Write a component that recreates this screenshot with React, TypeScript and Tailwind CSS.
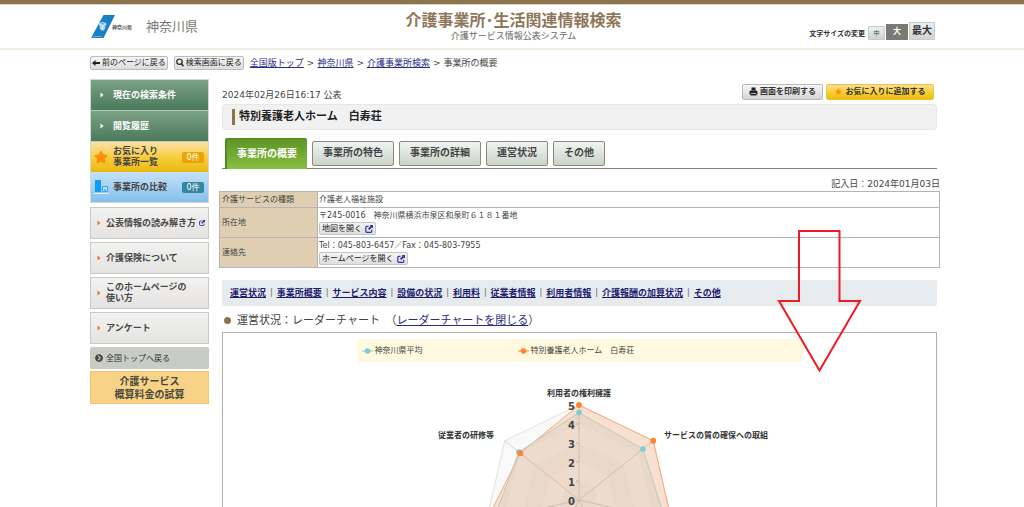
import { ReactNode } from "react";
import { FaChevronCircleRight, FaStar } from "react-icons/fa";

const AXES = 7;
const CX = 150;
const CY = 112;
const STEP = 19;

function point(axis: number, level: number): [number, number] {
  const angle = (axis * 2 * Math.PI) / AXES;
  return [CX + Math.sin(angle) * STEP * level, CY - Math.cos(angle) * STEP * level];
}

function polygon(levels: number[]): string {
  return levels.map((level, i) => point(i, level).map((n) => n.toFixed(2)).join(",")).join(" ");
}

const AVERAGE = [4.6, 4.3, 4.65, 4.2, 4.2, 4.6, 4.05];
const FACILITY = [5, 5, 5, 5, 5, 5, 3.95];
const RINGS = [5, 4, 3, 2, 1];

function RadarChart() {
  return (
    <svg
      viewBox="-79 0 460 230"
      width="460"
      height="230"
      className="block"
      role="img"
      aria-label="レーダーチャート"
      fontFamily="'DejaVu Sans','Noto Sans CJK JP',sans-serif"
    >
      {RINGS.map((level, i) => (
        <polygon key={level} points={polygon(Array(AXES).fill(level))} fill={i % 2 ? "#ffffff" : "#f9f9f9"} />
      ))}
      <polygon points={polygon(Array(AXES).fill(5))} fill="none" stroke="#e0e0e0" />
      {FACILITY.map((_, i) => {
        const [x, y] = point(i, 5);
        return <line key={i} x1={CX} y1={CY} x2={x} y2={y} stroke="#d2d2d2" />;
      })}
      {[1, 2, 3, 4].map((n) => (
        <line key={n} x1={CX - 3} x2={CX} y1={CY - n * STEP} y2={CY - n * STEP} stroke="#bbbbbb" />
      ))}
      <polygon points={polygon(FACILITY)} fill="#f58a45" fillOpacity="0.23" stroke="#f7ab7c" />
      <polygon points={polygon(AVERAGE)} fill="#a8b8b8" fillOpacity="0.18" stroke="#bccbc0" />
      {[0, 1, 2, 3, 4, 5].map((n) => (
        <text key={n} x={CX - 4} y={CY + 5 - n * STEP} fontSize="10" fontWeight="700" fill="#444444" textAnchor="end">
          {n}
        </text>
      ))}
      {AVERAGE.map((level, i) => {
        const [x, y] = point(i, level);
        return <circle key={i} cx={x} cy={y} r="2.8" fill="#80cbd3" />;
      })}
      {FACILITY.map((level, i) => {
        const [x, y] = point(i, level);
        return <circle key={i} cx={x} cy={y} r="2.9" fill="#ff8430" />;
      })}
      <g fontSize="8" fontWeight="700" fill="#333333">
        <text x={CX} y="8" textAnchor="middle">利用者の権利擁護</text>
        <text x="235" y="50">サービスの質の確保への取組</text>
        <text x="65" y="50" textAnchor="end">従業者の研修等</text>
      </g>
    </svg>
  );
}

function PrefectureLogo() {
  return (
    <svg width="24" height="24" viewBox="0 0 24 24" aria-hidden="true">
      <path d="M12.500 0H24L12.500 23H0z" fill="#1b7fc4" />
      <circle cx="11.500" cy="9.800" r="2.400" fill="none" stroke="#cfe7f5" strokeWidth="1" />
      <path d="M7.300 9c.2-1.600 1.800-2 2.900-1l1.300 1 1.300-1c1.200-1 2.700-.5 2.900 1l-1.500 2.800c.3 1.500-.3 2.700-1.400 3.600H10c-1-.9-1.500-2.100-1.200-3.600z" fill="#9fd0ed" />
      <path d="M9 9.300l2.500 2.200L14 9.300M11.500 11v4.200M9.800 13.200h3.400" stroke="#f0f8fd" strokeWidth=".8" fill="none" />
      <path d="M2 21.500h8.500" stroke="#8fc3e6" strokeWidth=".7" />
    </svg>
  );
}

function BackArrowIcon() {
  return (
    <svg width="8" height="8" viewBox="0 0 8 8" aria-hidden="true">
      <path d="M3.500 1L0 4l3.500 3V5H8V3H3.500z" fill="#222222" />
    </svg>
  );
}

function SearchIcon() {
  return (
    <svg width="8" height="9" viewBox="0 0 8 9" aria-hidden="true">
      <circle cx="3.500" cy="3.700" r="2.700" fill="none" stroke="#222222" strokeWidth="1.200" />
      <path d="M5.500 5.800L7.500 8.200" stroke="#222222" strokeWidth="1.500" />
    </svg>
  );
}

function PrinterIcon() {
  return (
    <svg width="9" height="9" viewBox="0 0 9 9" aria-hidden="true">
      <path d="M2.500 .5h4v2.700h-4zM.5 4.500L1.500 3.500h6l1 1v3H7V6H2v1.500H.5z" fill="#222222" />
      <path d="M2 6.700h5l.6 1.800H1.400z" fill="#222222" />
    </svg>
  );
}

function ExternalIcon({ size }: { size: number }) {
  return (
    <svg width={size} height={size} viewBox="0 0 8 8" aria-hidden="true">
      <path d="M3.500 1.300H1.800a1 1 0 0 0-1 1v4a1 1 0 0 0 1 1h4a1 1 0 0 0 1-1V4.800" fill="none" stroke="#2f33a4" strokeWidth="1.200" />
      <path d="M4.500 0H8v3.500L6.900 2.400 4.200 5.100 2.900 3.800 5.600 1.100z" fill="#2f33a4" />
    </svg>
  );
}

function ToolButton({ children }: { children: ReactNode }) {
  return (
    <button
      type="button"
      className="flex h-[14px] items-center gap-[2px] rounded-xs border border-[#bcbcbc] bg-linear-to-b from-[#f6f6f6] to-[#dcdcdc] px-px text-[8px] leading-none whitespace-nowrap text-[#222]"
    >
      {children}
    </button>
  );
}

function GreyLink({ children, external }: { children: ReactNode; external?: boolean }) {
  return (
    <a
      href="#"
      className="flex h-8 items-center gap-[5px] border border-[#c9c9c9] bg-linear-to-b from-[#f2f2f1] to-[#e4e3e2] pl-[6px] font-bold whitespace-nowrap text-[#484848]"
    >
      <svg width="4" height="6" viewBox="0 0 4 6" aria-hidden="true">
        <path d="M0.500 0.500L3.500 3L0.500 5.500z" fill="#f26b3a" />
      </svg>
      <span className="flex items-center gap-[3px]">
        <span>{children}</span>
        {external && <ExternalIcon size={6} />}
      </span>
    </a>
  );
}

function GreenLink({ children }: { children: ReactNode }) {
  return (
    <a
      href="#"
      className="flex h-[31px] items-center gap-[9px] border-b border-[#b9c9bd] bg-linear-to-b from-[#7ba184] to-[#4b7a5b] pl-[9px] font-bold text-white"
    >
      <svg width="4" height="6" viewBox="0 0 4 6" aria-hidden="true">
        <path d="M0.500 0.500L3.500 3L0.500 5.500z" fill="#ffffff" />
      </svg>
      {children}
    </a>
  );
}

function Sidebar() {
  return (
    <nav className="w-[119px] shrink-0 text-[9px] leading-[11px]" aria-label="メニュー">
      <div className="border border-[#d5d9d6]">
        <GreenLink>現在の検索条件</GreenLink>
        <GreenLink>閲覧履歴</GreenLink>
        <a
          href="#"
          className="flex h-[30px] items-center bg-linear-to-b from-[#fde1a4] via-[#f7cd3b] to-[#ecb90a] pr-1 pl-[3px] font-bold text-[#444]"
        >
          <FaStar size={14} color="#ff8c0a" />
          <span className="ml-[5px] flex-1">
            お気に入り
            <br />
            事業所一覧
          </span>
          <span className="w-[22px] rounded-xs bg-[#eaa500] text-center text-[8px] font-normal text-white">0件</span>
        </a>
        <a
          href="#"
          className="flex h-[30px] items-center bg-linear-to-b from-[#c4e2f6] to-[#84bfed] pr-1 pl-[3px] font-bold text-[#444]"
        >
          <svg width="15" height="14" viewBox="0 0 15 14" aria-hidden="true">
            <path d="M1 0h6v12H1z" fill="#0c9bf5" />
            <path d="M8.500 6.500h5v5h-5z" fill="#b9e0fb" stroke="#2ba5f2" />
            <path d="M10 9h2v2h-2z" fill="#5cb8f4" />
            <path d="M0 13.500h15" stroke="#e4f3fd" />
          </svg>
          <span className="ml-1 flex-1">事業所の比較</span>
          <span className="w-[22px] rounded-xs bg-[#34859f] text-center text-[8px] font-normal text-white">0件</span>
        </a>
      </div>
      <div className="mt-1 flex flex-col gap-[3px]">
        <GreyLink external>公表情報の読み解き方</GreyLink>
        <GreyLink>介護保険について</GreyLink>
        <GreyLink>
          このホームページの
          <br />
          使い方
        </GreyLink>
        <GreyLink>アンケート</GreyLink>
        <a
          href="#"
          className="flex h-[22px] items-center gap-[3px] rounded-xs bg-[#c8ccc4] pl-[5px] text-[8px] text-[#333]"
        >
          <FaChevronCircleRight size={8} color="#444" />
          全国トップへ戻る
        </a>
      </div>
      <a
        href="#"
        className="mt-[2px] flex h-[33px] items-center justify-center border border-[#f3c56e] bg-[#f8d287] text-center text-[10px] leading-[13px] font-bold text-[#4a4a3c]"
      >
        介護サービス
        <br />
        概算料金の試算
      </a>
    </nav>
  );
}

const TABS = ["事業所の特色", "事業所の詳細", "運営状況", "その他"];
const SECTIONS = [
  "運営状況",
  "事業所概要",
  "サービス内容",
  "設備の状況",
  "利用料",
  "従業者情報",
  "利用者情報",
  "介護報酬の加算状況",
  "その他",
];

function OpenButton({ children }: { children: ReactNode }) {
  return (
    <button
      type="button"
      className="flex h-[13px] items-center gap-[3px] rounded-xs border border-[#c4c4c4] bg-linear-to-b from-[#f5f5f5] to-[#dedede] px-[2px] leading-none text-[#222]"
    >
      {children}
      <ExternalIcon size={8} />
    </button>
  );
}

function DetailTable() {
  const head = "w-[98px] border border-[#b4b4b4] bg-[#dfceb1] px-[2px] text-left font-normal";
  const cell = "border border-[#b4b4b4] px-px";
  return (
    <table className="w-full border-collapse text-[8px] leading-[12px] text-[#444]">
      <tbody>
        <tr className="h-4">
          <th scope="row" className={head}>介護サービスの種類</th>
          <td className={cell}>介護老人福祉施設</td>
        </tr>
        <tr className="h-[30px]">
          <th scope="row" className={head}>所在地</th>
          <td className={cell}>
            〒245-0016　神奈川県横浜市泉区和泉町６１８１番地
            <OpenButton>地図を開く</OpenButton>
          </td>
        </tr>
        <tr className="h-[30px]">
          <th scope="row" className={head}>連絡先</th>
          <td className={cell}>
            Tel：045-803-6457／Fax：045-803-7955
            <OpenButton>ホームページを開く</OpenButton>
          </td>
        </tr>
      </tbody>
    </table>
  );
}

function LegendItem({ color, children }: { color: string; children: ReactNode }) {
  return (
    <span className="flex items-center gap-[2px]">
      <svg width="11" height="6" viewBox="0 0 11 6" aria-hidden="true">
        <path d="M0 3h11" stroke={color} />
        <circle cx="5.500" cy="3" r="2.800" fill={color} />
      </svg>
      {children}
    </span>
  );
}

export default function App() {
  return (
    <div
      lang="ja"
      className="relative min-h-screen overflow-x-hidden bg-white font-['DejaVu_Sans','Noto_Sans_CJK_JP',sans-serif] text-[9px] leading-[12px] text-[#444]"
    >
      <header className="border-t-4 border-b-2 border-t-[#8e744b] border-b-[#eef0e3]">
        <div className="border-t border-[#ddd5c8]">
          <div className="mx-auto grid h-[43px] max-w-[856px] grid-cols-3 pr-1 pl-[7px]">
            <div className="flex items-center">
              <PrefectureLogo />
              <span className="-ml-[3px] text-[5px] font-bold text-[#555]">神奈川県</span>
              <span className="ml-[14px] text-[13px] text-[#777]">神奈川県</span>
            </div>
            <div className="flex flex-col items-center pt-[6px] whitespace-nowrap">
              <h1 className="text-[16px] leading-[19px] font-bold text-[#8e7759]">介護事業所･生活関連情報検索</h1>
              <p className="text-[9px] leading-[12px] text-[#666]">介護サービス情報公表システム</p>
            </div>
            <div className="flex items-end justify-end gap-px pr-px pb-2">
              <span className="mr-[2px] text-[7px] font-bold text-[#333]">文字サイズの変更</span>
              <button type="button" className="h-[14px] w-[17px] border border-[#c8cccc] bg-linear-to-b from-[#e9f0f1] to-[#d2d2d2] text-[6px] leading-none">
                中
              </button>
              <button type="button" className="h-4 w-[22px] bg-[#797a74] text-[8px] leading-none font-bold text-white">
                大
              </button>
              <button type="button" className="h-[18px] w-[26px] border border-[#c8cccc] bg-linear-to-b from-[#e9f0f1] to-[#d2d2d2] text-[10px] leading-none font-bold text-[#333]">
                最大
              </button>
            </div>
          </div>
        </div>
      </header>

      <div className="mx-auto max-w-[856px] pl-[6px]">
        <div className="flex h-6 items-center gap-[6px] pt-px">
          <ToolButton>
            <BackArrowIcon />
            前のページに戻る
          </ToolButton>
          <ToolButton>
            <SearchIcon />
            検索画面に戻る
          </ToolButton>
          <nav className="flex items-center gap-[3px] text-[9px]" aria-label="パンくず">
            <a href="#" className="text-[#2b2b80] underline">全国版トップ</a>
            <span>&gt;</span>
            <a href="#" className="text-[#2b2b80] underline">神奈川県</a>
            <span>&gt;</span>
            <a href="#" className="text-[#2b2b80] underline">介護事業所検索</a>
            <span>&gt;</span>
            <span>事業所の概要</span>
          </nav>
        </div>

        <div className="flex items-start gap-[10px] pt-[5px]">
          <Sidebar />
          <main className="min-w-0 flex-1">
            <div className="px-[3px]">
              <div className="flex h-[25px] items-center justify-between pt-px pr-[3px]">
                <p className="pt-[6px]">2024年02月26日16:17 公表</p>
                <div className="flex gap-[3px] pb-px text-[8px] leading-none font-bold text-[#333]">
                  <button type="button" className="flex h-4 w-[81px] items-center justify-center gap-[2px] rounded-xs border border-[#bababa] bg-linear-to-b from-[#f6f6f6] to-[#d6d6d6]">
                    <PrinterIcon />
                    画面を印刷する
                  </button>
                  <button type="button" className="flex h-4 w-[108px] items-center justify-center gap-1 rounded-xs border border-[#efc23c] bg-linear-to-b from-[#fddd94] via-[#f8d02f] to-[#edbd0c]">
                    <FaStar size={7} color="#ff8c0a" />
                    お気に入りに追加する
                  </button>
                </div>
              </div>
              <div className="flex h-[26px] items-center rounded-sm border border-[#e6e6e6] bg-[#f1f1f1] pl-[9px]">
                <h2 className="border-l-3 border-[#8e744b] pl-[4px] text-[11px] leading-4 font-bold text-[#222]">
                  特別養護老人ホーム　白寿荘
                </h2>
              </div>
              <div className="mt-2 flex items-center gap-[5px] border-b border-[#858272] pl-[3px] text-[10px] font-bold" role="tablist">
                <button
                  type="button"
                  role="tab"
                  aria-selected="true"
                  className="-mb-px h-[31px] w-[82px] rounded-t-xs border-t border-l-2 border-[#4e8a1c] bg-linear-to-b from-[#5d9424] to-[#88c043] text-white"
                >
                  事業所の概要
                </button>
                {TABS.map((tab) => (
                  <button
                    key={tab}
                    type="button"
                    role="tab"
                    aria-selected="false"
                    className="h-[25px] rounded-xs border border-[#8b897c] bg-linear-to-b from-[#f1f4f2] to-[#c9d3c9] px-[10px] text-[#444]"
                  >
                    {tab}
                  </button>
                ))}
              </div>
            </div>
            <p className="pt-[9px] pb-px text-right">記入日：2024年01月03日</p>
            <DetailTable />
            <div className="px-[3px]">
              <nav className="mt-3 flex h-[26px] items-center gap-1 rounded-xs bg-[#e7ebee] pl-2 whitespace-nowrap" aria-label="項目">
                {SECTIONS.map((section, i) => (
                  <span key={section} className="flex items-center gap-1">
                    {i > 0 && <span className="text-[8px] text-[#666]">|</span>}
                    <a href="#" className="font-bold text-[#1d1d70] underline">{section}</a>
                  </span>
                ))}
              </nav>
              <h3 className="flex h-[26px] items-center pt-[3px] pl-[2px] text-[11px] leading-4">
                <span className="mr-[6px] size-[7px] rounded-full bg-[#8e744b]" />
                運営状況：レーダーチャート　（
                <a href="#" className="text-[#2b2b80] underline">レーダーチャートを閉じる</a>）
              </h3>
              <section className="border border-[#b0b0b0] pt-[6px]">
                <div className="mx-auto mb-[26px] flex h-[23px] max-w-[446px] items-center bg-[#fffadf] pl-[5px] text-[8px]">
                  <div className="w-[156px]">
                    <LegendItem color="#80cbd3">神奈川県平均</LegendItem>
                  </div>
                  <LegendItem color="#ff8430">特別養護老人ホーム　白寿荘</LegendItem>
                </div>
                <div className="flex justify-center">
                  <RadarChart />
                </div>
              </section>
            </div>
          </main>
        </div>
      </div>

      <svg className="pointer-events-none absolute top-[229px] left-[777px]" width="86" height="144" viewBox="0 0 86 144" aria-hidden="true">
        <path d="M22 2H62.500V72H83L42.500 141.500L2 72H22z" fill="none" stroke="#ed1c24" strokeWidth="2" />
      </svg>
    </div>
  );
}
